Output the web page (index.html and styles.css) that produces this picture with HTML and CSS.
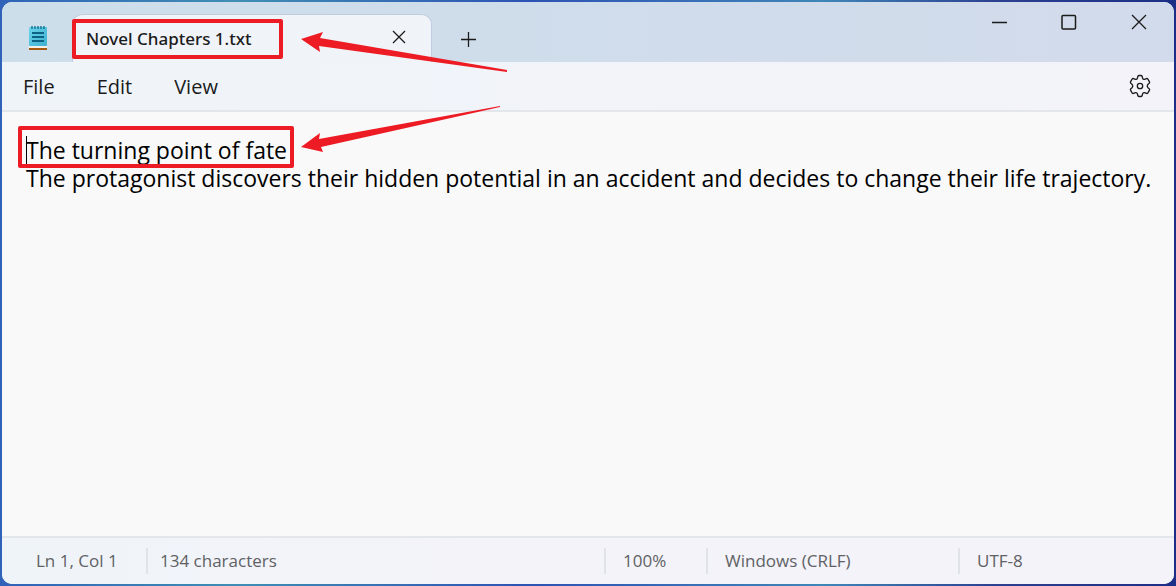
FILE: index.html
```html
<!DOCTYPE html>
<html lang="en">
<head>
    <meta charset="UTF-8">
    <meta name="viewport" content="width=device-width, initial-scale=1.0">
    <title>Novel Chapters 1.txt - Notepad</title>
    <link rel="stylesheet" href="styles.css">
</head>
<body>
    <div class="window">
        <header class="titlebar">
            <svg class="app-icon" viewBox="0 0 20 26" aria-hidden="true">
                <defs>
                    <linearGradient id="page" x1="0" y1="0" x2="1" y2="1">
                        <stop offset="0" stop-color="#6ad4ea"/>
                        <stop offset="1" stop-color="#3fb0d2"/>
                    </linearGradient>
                </defs>
                <rect x="1" y="23" width="18" height="2" fill="#a85a10"/>
                <rect x="1" y="21" width="18" height="2" fill="#f4efe8"/>
                <rect x="1" y="2" width="18" height="19" rx="1" fill="url(#page)"/>
                <path d="M4 1v3M7 1v3M10 1v3M13 1v3M16 1v3" stroke="#14728f" stroke-width="1.4"/>
                <path d="M4 8h12M4 12h12M4 16h12" stroke="#0b6285" stroke-width="1.9"/>
            </svg>
            <div class="tab">
                <span class="tab-title">Novel Chapters 1.txt</span>
                <button class="tab-close" aria-label="Close tab">
                    <svg width="14" height="14" viewBox="0 0 14 14"><path d="M1 1l12 12M13 1L1 13"/></svg>
                </button>
            </div>
            <button class="tab-add" aria-label="New tab">
                <svg width="16" height="16" viewBox="0 0 16 16"><path d="M8.500 1v15M1 8.500h15"/></svg>
            </button>
            <div class="window-buttons">
                <button aria-label="Minimize">
                    <svg width="16" height="16" viewBox="0 0 16 16"><path d="M1 8.500h15"/></svg>
                </button>
                <button aria-label="Maximize">
                    <svg width="16" height="16" viewBox="0 0 16 16"><rect x="1" y="1.500" width="13.500" height="13.500" rx="1" stroke-width="1.500"/></svg>
                </button>
                <button aria-label="Close">
                    <svg width="16" height="16" viewBox="0 0 16 16"><path d="M1 1l14 14M15 1L1 15"/></svg>
                </button>
            </div>
        </header>

        <nav class="menubar">
            <button>File</button>
            <button>Edit</button>
            <button>View</button>
            <button class="settings" aria-label="Settings">
                <svg width="24" height="24" viewBox="0 0 24 24">
                    <path d="M9.800 2.500Q10 1.600 11 1.500h2q1 .1 1.200 1l.4 1.700q.5 1.500 2 1.100l1.800-.7q.9-.3 1.500.5l1.600 2.700q.4.900-.3 1.500l-1.400 1.200q-1.300 1.500 0 3l1.400 1.200q.7.600.3 1.500l-1.600 2.700q-.6.800-1.500.5l-1.800-.7q-1.500-.4-2 1.100l-.4 1.700q-.2.900-1.200 1h-2q-1-.1-1.200-1l-.4-1.700q-.5-1.500-2-1.100l-1.800.7q-.9.300-1.500-.5l-1.600-2.700q-.4-.9.300-1.500l1.400-1.200q1.300-1.500 0-3L2.800 9.300q-.7-.6-.3-1.500l1.600-2.700q.6-.8 1.500-.5l1.800.7q1.500.4 2-1.100z"/>
                    <circle cx="12" cy="12" r="2.700"/>
                </svg>
            </button>
        </nav>

        <main class="editor">
            <textarea aria-label="Text editor" spellcheck="false">The turning point of fate
The protagonist discovers their hidden potential in an accident and decides to change their life trajectory.</textarea>
            <span class="caret"></span>
        </main>

        <footer class="statusbar">
            <span class="position">Ln 1, Col 1</span>
            <span class="count">134 characters</span>
            <span class="zoom">100%</span>
            <span class="line-ending">Windows (CRLF)</span>
            <span class="encoding">UTF-8</span>
        </footer>
    </div>

    <!-- red callouts over the window -->
    <div class="mark mark-title"></div>
    <div class="mark mark-line"></div>
    <svg class="arrow arrow-title" width="208" height="42" viewBox="0 0 208 42" aria-hidden="true">
        <path d="M1 9l22-7-3 6 187 32v2L19 16l1 6z"/>
    </svg>
    <svg class="arrow arrow-line" width="208" height="50" viewBox="0 0 208 50" aria-hidden="true">
        <path d="M1 42l19-14-1 6L200 1v1L21 42l2 5z"/>
    </svg>
</body>
</html>
```
FILE: styles.css
```css
* {
    box-sizing: border-box;
}
body {
    margin: 0;
    padding: 2px;
    height: 100vh;
    position: relative;
    overflow: hidden;
    font-family: "Open Sans", "Noto Sans", sans-serif;
    color: #1b1b1b;
    background: linear-gradient(90deg, #2f62b8 0%, #3f8fb4 20%, #2e52b4 45%, #3f86b8 70%, #2c3f90 85%, #1c2f86 100%);
}
.window {
    height: 100%;
    display: flex;
    flex-direction: column;
    border-radius: 10px;
    overflow: hidden;
    background-color: #f9f9f9;
}
button {
    padding: 0;
    border: none;
    background: none;
    color: inherit;
    font: inherit;
}
button svg {
    display: block;
    fill: none;
    stroke: #1b1b1b;
    stroke-width: 1.3;
}

/* title bar */
.titlebar {
    flex: none;
    height: 60px;
    display: flex;
    background: linear-gradient(90deg, #cddeeb, #d2dbeb);
}
.app-icon {
    width: 20px;
    height: 26px;
    margin: 23px 16px 0 26px;
}
.tab {
    width: 360px;
    margin: 12px 0 0 8px;
    padding: 0 25px 0 13px;
    display: flex;
    align-items: center;
    justify-content: space-between;
    border: 1px solid #c0cde0;
    border-bottom: none;
    border-radius: 10px 10px 0 0;
    background-color: #f0f4f9;
}
.tab-title {
    font-family: "Noto Sans", sans-serif;
    font-size: 17px;
    font-weight: 500;
}
.tab-close {
    padding-bottom: 3px;
}
.tab-add {
    width: 36px;
    margin: 14px 0 0 18px;
    display: flex;
    align-items: center;
    justify-content: center;
}
.window-buttons {
    margin-left: auto;
    display: flex;
}
.window-buttons button {
    width: 70px;
    height: 40px;
    display: flex;
    align-items: center;
    justify-content: center;
}

/* menu */
.menubar {
    flex: none;
    height: 50px;
    padding: 0 22px 0 21px;
    display: flex;
    align-items: center;
    gap: 42px;
    font-size: 20px;
    background: linear-gradient(90deg, #eff4f9, #f3f3f9);
    border-bottom: 2px solid #e3e7ec;
}
.menubar .settings {
    margin-left: auto;
}

/* editor */
.editor {
    flex: 1;
    position: relative;
    display: flex;
}
.editor textarea {
    flex: 1;
    padding: 24px 8px 0 24px;
    border: none;
    outline: none;
    resize: none;
    background: transparent;
    color: #000;
    font-family: inherit;
    font-size: 23px;
    line-height: 28px;
}
.caret {
    position: absolute;
    left: 24px;
    top: 24px;
    width: 1px;
    height: 28px;
    background-color: #000;
}

/* status bar */
.statusbar {
    flex: none;
    height: 48px;
    display: flex;
    align-items: center;
    font-size: 17px;
    line-height: 26px;
    color: #5f6164;
    background: linear-gradient(90deg, #eff4f9, #f3f3f9 40%);
    border-top: 2px solid #e3e6eb;
}
.statusbar span {
    padding-left: 17px;
    border-left: 2px solid #e0e3e8;
}
.statusbar .position {
    width: 144px;
    padding-left: 34px;
    border-left: none;
}
.statusbar .count {
    flex: 1;
    padding-left: 12px;
}
.statusbar .zoom {
    width: 102px;
}
.statusbar .line-ending {
    width: 252px;
}
.statusbar .encoding {
    width: 216px;
}

/* callouts */
.mark {
    position: absolute;
    border: 4px solid #ed1c24;
    border-radius: 2px;
    pointer-events: none;
}
.mark-title {
    left: 72px;
    top: 19px;
    width: 211px;
    height: 40px;
}
.mark-line {
    left: 18px;
    top: 126px;
    width: 276px;
    height: 42px;
}
.arrow {
    position: absolute;
    left: 300px;
    fill: #ed1c24;
    pointer-events: none;
}
.arrow-title {
    top: 30px;
}
.arrow-line {
    top: 105px;
}
```
